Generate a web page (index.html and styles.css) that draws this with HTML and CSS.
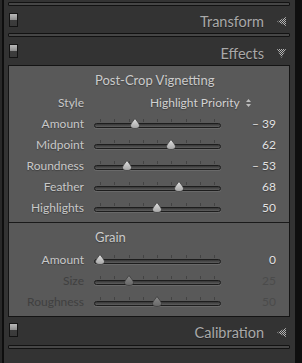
FILE: index.html
```html
<!DOCTYPE html>
<html lang="en">
<head>
<meta charset="utf-8">
<title>Effects panel</title>
<link rel="stylesheet" href="styles.css">
</head>
<body>
<svg class="defs" aria-hidden="true">
  <defs>
    <linearGradient id="thumbOn" x1="0" y1="0" x2="0" y2="1">
      <stop offset="0" stop-color="#e2e2e2"/>
      <stop offset="1" stop-color="#a4a4a4"/>
    </linearGradient>
    <linearGradient id="thumbOff" x1="0" y1="0" x2="0" y2="1">
      <stop offset="0" stop-color="#8a8a8a"/>
      <stop offset="1" stop-color="#666666"/>
    </linearGradient>
    <pattern id="dots" patternUnits="userSpaceOnUse" width="2" height="2">
      <rect x="0" y="0" width="1" height="1" fill="#b4b4b4"/>
      <rect x="1" y="1" width="1" height="1" fill="#b4b4b4"/>
    </pattern>
  </defs>
</svg>
<div class="frame">
  <div class="edge-left"></div>
  <div class="main">
    <div class="divider"></div>
    <div class="header hdr-a">
      <span class="switch"></span>
      <span class="title">Transform</span>
      <svg class="tri" viewBox="0 0 9 9"><polygon points="0,4.5 9,0 9,9" fill="url(#dots)"/></svg>
    </div>
    <div class="divider"></div>
    <div class="header hdr-b">
      <span class="switch"></span>
      <span class="title">Effects</span>
      <svg class="tri" viewBox="0 0 9 9"><polygon points="0,0 9,0 4.5,9" fill="url(#dots)"/></svg>
    </div>

    <div class="panel">
      <section class="group">
        <div class="group-title">Post-Crop Vignetting</div>
        <div class="row">
          <span class="label">Style</span>
          <span class="select">Highlight Priority
            <svg class="updown" viewBox="0 0 5 8"><polygon points="2.5,0 5,3 0,3"/><polygon points="0,5 5,5 2.5,8"/></svg>
          </span>
        </div>
        <div class="row">
          <span class="label">Amount</span>
          <span class="slider"><span class="ticks"><i></i><i></i><i></i><i></i><i></i><i></i><i></i><i></i><i></i></span><span class="track"></span><svg class="thumb" style="left:36px" viewBox="0 0 10 11"><path d="M5 .5C6 2 9.5 5.8 9.5 7.6 9.5 9.8 7.4 10.5 5 10.5S.5 9.8.5 7.6C.5 5.8 4 2 5 .5Z"/></svg></span>
          <span class="value">– 39</span>
        </div>
        <div class="row">
          <span class="label">Midpoint</span>
          <span class="slider"><span class="ticks"><i></i><i></i><i></i><i></i><i></i><i></i><i></i><i></i><i></i></span><span class="track"></span><svg class="thumb" style="left:72px" viewBox="0 0 10 11"><path d="M5 .5C6 2 9.5 5.8 9.5 7.6 9.5 9.8 7.4 10.5 5 10.5S.5 9.8.5 7.6C.5 5.8 4 2 5 .5Z"/></svg></span>
          <span class="value">62</span>
        </div>
        <div class="row">
          <span class="label">Roundness</span>
          <span class="slider"><span class="ticks"><i></i><i></i><i></i><i></i><i></i><i></i><i></i><i></i><i></i></span><span class="track"></span><svg class="thumb" style="left:28px" viewBox="0 0 10 11"><path d="M5 .5C6 2 9.5 5.8 9.5 7.6 9.5 9.8 7.4 10.5 5 10.5S.5 9.8.5 7.6C.5 5.8 4 2 5 .5Z"/></svg></span>
          <span class="value">– 53</span>
        </div>
        <div class="row">
          <span class="label">Feather</span>
          <span class="slider"><span class="ticks"><i></i><i></i><i></i><i></i><i></i><i></i><i></i><i></i><i></i></span><span class="track"></span><svg class="thumb" style="left:80px" viewBox="0 0 10 11"><path d="M5 .5C6 2 9.5 5.8 9.5 7.6 9.5 9.8 7.4 10.5 5 10.5S.5 9.8.5 7.6C.5 5.8 4 2 5 .5Z"/></svg></span>
          <span class="value">68</span>
        </div>
        <div class="row">
          <span class="label">Highlights</span>
          <span class="slider"><span class="ticks"><i></i><i></i><i></i><i></i><i></i><i></i><i></i><i></i><i></i></span><span class="track"></span><svg class="thumb" style="left:58px" viewBox="0 0 10 11"><path d="M5 .5C6 2 9.5 5.8 9.5 7.6 9.5 9.8 7.4 10.5 5 10.5S.5 9.8.5 7.6C.5 5.8 4 2 5 .5Z"/></svg></span>
          <span class="value">50</span>
        </div>
      </section>

      <section class="group grain">
        <div class="group-title">Grain</div>
        <div class="row">
          <span class="label">Amount</span>
          <span class="slider"><span class="ticks"><i></i><i></i><i></i><i></i><i></i><i></i><i></i><i></i><i></i></span><span class="track"></span><svg class="thumb" style="left:1px" viewBox="0 0 10 11"><path d="M5 .5C6 2 9.5 5.8 9.5 7.6 9.5 9.8 7.4 10.5 5 10.5S.5 9.8.5 7.6C.5 5.8 4 2 5 .5Z"/></svg></span>
          <span class="value">0</span>
        </div>
        <div class="row off">
          <span class="label">Size</span>
          <span class="slider"><span class="ticks"><i></i><i></i><i></i><i></i><i></i><i></i><i></i><i></i><i></i></span><span class="track"></span><svg class="thumb" style="left:30px" viewBox="0 0 10 11"><path d="M5 .5C6 2 9.5 5.8 9.5 7.6 9.5 9.8 7.4 10.5 5 10.5S.5 9.8.5 7.6C.5 5.8 4 2 5 .5Z"/></svg></span>
          <span class="value">25</span>
        </div>
        <div class="row off">
          <span class="label">Roughness</span>
          <span class="slider"><span class="ticks"><i></i><i></i><i></i><i></i><i></i><i></i><i></i><i></i><i></i></span><span class="track"></span><svg class="thumb" style="left:58px" viewBox="0 0 10 11"><path d="M5 .5C6 2 9.5 5.8 9.5 7.6 9.5 9.8 7.4 10.5 5 10.5S.5 9.8.5 7.6C.5 5.8 4 2 5 .5Z"/></svg></span>
          <span class="value">50</span>
        </div>
      </section>
    </div>

    <div class="header hdr-c">
      <span class="switch"></span>
      <span class="title">Calibration</span>
      <svg class="tri" viewBox="0 0 9 9"><polygon points="0,4.5 9,0 9,9" fill="url(#dots)"/></svg>
    </div>
    <div class="divider"></div>
  </div>
  <div class="edge-right"></div>
</div>
</body>
</html>
```

FILE: styles.css
```css
* { box-sizing: border-box; }

html, body {
  margin: 0;
  padding: 0;
}

body {
  width: 302px;
  height: 363px;
  overflow: hidden;
  background: #333333;
  font-family: Lato, "Open Sans", sans-serif;
}

.defs {
  position: absolute;
  width: 0;
  height: 0;
}

.frame {
  display: flex;
  height: 363px;
}

.edge-left {
  width: 4px;
  border-left: 2px solid #282828;
  background: #0e0e0e;
}

.main {
  width: 291px;
  padding: 2px 5px 0 4px;
  background: #333333;
}

.edge-right {
  width: 7px;
  background: #0f0f0f;
}

.divider {
  height: 4px;
  border: 1px solid #121212;
  border-radius: 1px;
  background: #464646;
}

/* section headers */
.header {
  display: flex;
  align-items: flex-start;
  padding-left: 1px;
  padding-right: 4px;
}

.hdr-a { height: 27px; padding-top: 7px; }
.hdr-b { height: 28px; padding-top: 7px; }
.hdr-c { height: 28px; padding-top: 6px; }

.switch {
  width: 9px;
  height: 14px;
  border: 1px solid #131313;
  background: linear-gradient(#b9b9b9, #8a8a8a 50%, #3d3d3d 50%, #3a3a3a);
}

.title {
  margin-left: auto;
  font-size: 14.5px;
  line-height: 17px;
  color: #a9a9a9;
  text-shadow: 0 1px 0 rgba(0, 0, 0, 0.35);
}

.hdr-b .title,
.hdr-c .title { margin-top: 1px; }

.tri {
  width: 9px;
  height: 9px;
  margin-left: 13px;
  margin-top: 4px;
}

.hdr-b .tri,
.hdr-c .tri { margin-top: 5px; }

/* panel */
.panel {
  border: 1px solid #141414;
  background: #595959;
}

.group {
  padding-bottom: 4px;
}

.grain {
  border-top: 1px solid #1a1a1a;
}

.group-title {
  padding-top: 3px;
  padding-left: 86px;
  font-size: 13px;
  line-height: 23px;
  color: #cbcbcb;
  text-shadow: 0 1px 1px rgba(0, 0, 0, 0.3);
}

.row {
  display: flex;
  align-items: flex-start;
  height: 21px;
}

.label {
  width: 75px;
  text-align: right;
  font-size: 12px;
  line-height: 21px;
  color: #c8c8c8;
  text-shadow: 0 1px 1px rgba(0, 0, 0, 0.3);
}

.select {
  display: flex;
  align-items: center;
  gap: 6px;
  margin-left: 66px;
  font-size: 12px;
  line-height: 21px;
  color: #d2d2d2;
  text-shadow: 0 1px 1px rgba(0, 0, 0, 0.3);
}

.updown {
  width: 5px;
  height: 8px;
  fill: #bdbdbd;
}

.slider {
  position: relative;
  display: block;
  width: 127px;
  height: 21px;
  margin-left: 10px;
}

.ticks {
  display: flex;
  justify-content: space-between;
  height: 3px;
  margin-top: 6px;
  padding: 0 6px;
}

.ticks i {
  display: block;
  width: 1px;
  height: 3px;
  background: #434343;
}

.track {
  display: block;
  height: 5px;
  margin-top: 1px;
  border: 1px solid #1d1d1d;
  border-radius: 3px;
  background: linear-gradient(#363636, #5e5e5e);
  box-shadow: 0 1px 0 rgba(255, 255, 255, 0.1);
}

.thumb {
  position: absolute;
  top: 5px;
  width: 10px;
  height: 11px;
  fill: url(#thumbOn);
  stroke: #3a3a3a;
  stroke-width: 0.7;
}

.value {
  width: 55px;
  text-align: right;
  font-size: 12px;
  line-height: 21px;
  color: #e2e2e2;
  text-shadow: 0 1px 1px rgba(0, 0, 0, 0.3);
}

.off .label {
  color: #404040;
  text-shadow: none;
}

.off .value {
  color: #4b4b4b;
  text-shadow: none;
}

.off .thumb {
  fill: url(#thumbOff);
}
```
